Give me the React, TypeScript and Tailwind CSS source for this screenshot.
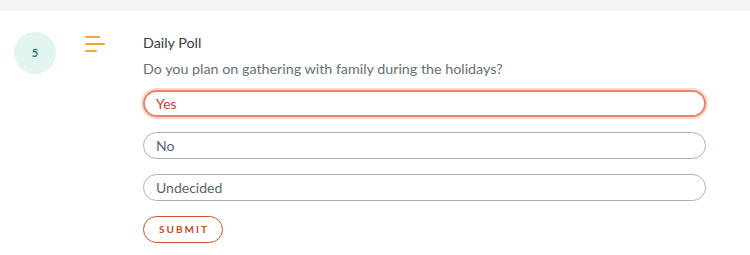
export default function App() {
  const options = ['Yes', 'No', 'Undecided'];
  const selected = 'Yes';

  return (
    <div className="w-[750px] h-[255px] bg-white font-['Lato','Noto_Sans',sans-serif] overflow-hidden">
      <div className="h-[11px] bg-[#f3f4f5]" />
      <div className="flex pl-[14px] pt-[21px]">
        {/* step badge */}
        <div className="w-[42px] h-[42px] rounded-full bg-[#e2f5f0] flex items-center justify-center text-[11px] font-bold text-[#2a7f68] shrink-0">
          5
        </div>
        {/* poll icon */}
        <div className="ml-[29px] mt-[4px] w-[20px] flex flex-col gap-[5px] shrink-0">
          <div className="h-[2px] w-[15px] bg-[#f5a531] rounded-full" />
          <div className="h-[2px] w-[20px] bg-[#f5a531] rounded-full" />
          <div className="h-[2px] w-[12px] bg-[#f5a531] rounded-full" />
        </div>
        <div className="ml-[38px] w-[563px]">
          <div className="text-[14.3px] leading-[21px] text-[#33403f]">Daily Poll</div>
          <div className="mt-[5px] text-[14.3px] leading-[21px] text-[#66707a]">
            Do you plan on gathering with family during the holidays?
          </div>
          <div className="mt-[11px] flex flex-col gap-[15px]">
            {options.map((o) =>
              o === selected ? (
                <button
                  key={o}
                  className="h-[27px] w-full rounded-full border-2 border-[#e4846f] shadow-[0_0_0_2px_#fbd8cf] text-left pl-[11px] text-[14px] text-[#c4432b]"
                >
                  {o}
                </button>
              ) : (
                <button
                  key={o}
                  className="h-[27px] w-full rounded-full border border-[#aab2b6] text-left pl-[12px] text-[14px] text-[#5b656c]"
                >
                  {o}
                </button>
              )
            )}
          </div>
          <button className="mt-[15px] h-[27px] w-[80px] rounded-full border-[1.5px] border-[#c9502f] text-[10px] font-bold tracking-[0.2em] text-[#c44a2d] pl-[2px]">
            SUBMIT
          </button>
        </div>
      </div>
    </div>
  );
}
